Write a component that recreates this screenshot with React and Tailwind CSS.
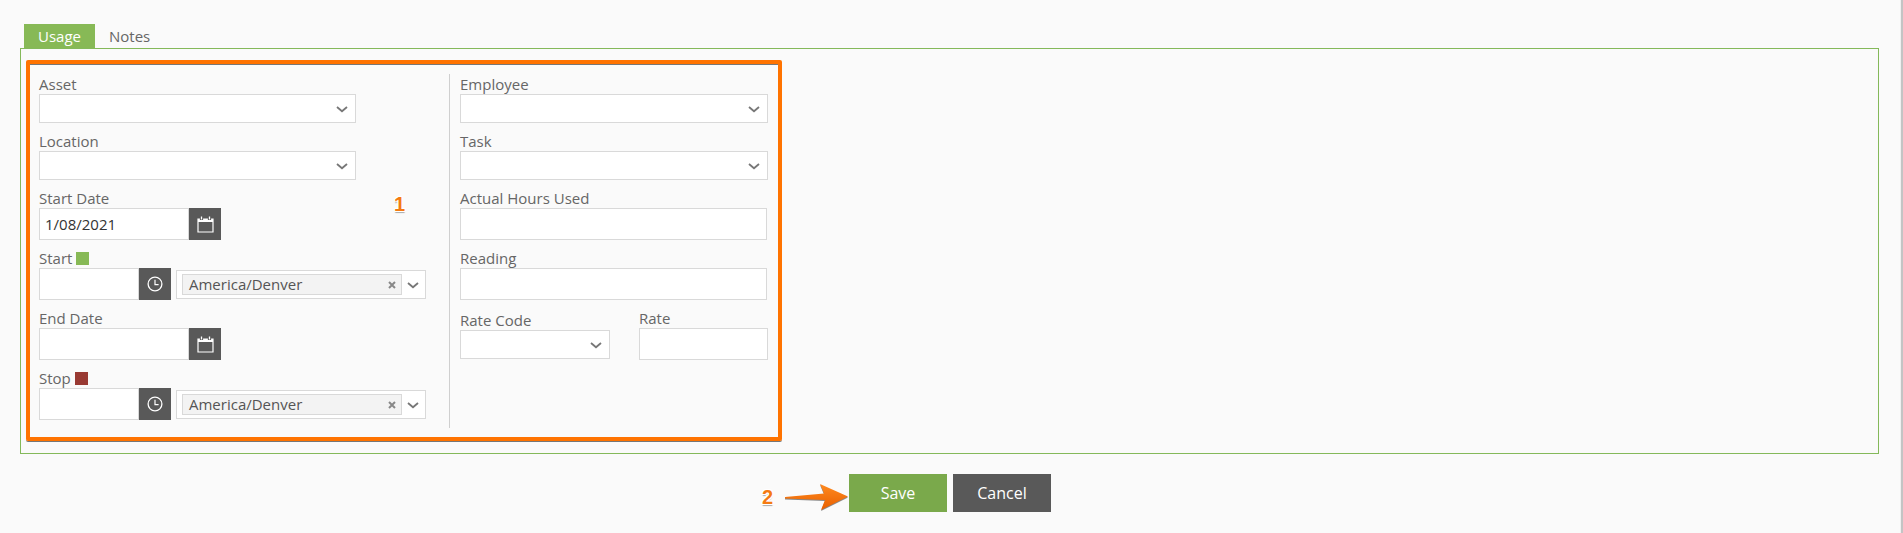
import React from 'react';

const Chevron = ({ className = '' }) => (
    <svg width="12" height="8" viewBox="0 0 12 8" className={className}>
        <path d="M1 2 L6 6.3 L11 2" fill="none" stroke="#777" strokeWidth="1.8" />
    </svg>
);

const CalendarIcon = () => (
    <svg width="17" height="17" viewBox="0 0 17 17">
        <path d="M1 3 H16 V16 H1 Z" fill="none" stroke="#fff" strokeWidth="1.2" />
        <path d="M1 3 H16 V6 H1 Z" fill="#fff" />
        <path d="M4.5 0.5 V4 M12.5 0.5 V4" stroke="#595959" strokeWidth="3.2" />
        <path d="M4.5 0.5 V3.5 M12.5 0.5 V3.5" stroke="#fff" strokeWidth="1.3" />
    </svg>
);

const ClockIcon = () => (
    <svg width="16" height="16" viewBox="0 0 16 16">
        <circle cx="8" cy="8" r="6.9" fill="none" stroke="#fff" strokeWidth="1.3" />
        <path d="M8 3.8 V8.6 H11.6" fill="none" stroke="#fff" strokeWidth="1.2" />
    </svg>
);

const Label = ({ children, className = '' }) => (
    <div className={`h-5 leading-[21px] text-[15px] text-[#666] ${className}`}>{children}</div>
);

const Combo = ({ className = 'w-full' }) => (
    <div className={`h-[29px] bg-white border border-[#d9d9d9] flex items-center justify-end pr-[7px] ${className}`}>
        <Chevron />
    </div>
);

const TextBox = ({ className = 'w-full', value = '' }) => (
    <input
        readOnly
        value={value}
        className={`h-[32px] bg-white border border-[#d9d9d9] pl-[5px] text-[15px] text-[#333] outline-none ${className}`}
    />
);

const IconInput = ({ width, icon, value }) => (
    <div className="flex">
        <TextBox className={width} value={value} />
        <div className="w-[32px] h-[32px] bg-[#595959] flex items-center justify-center">{icon}</div>
    </div>
);

const TimeZone = () => (
    <div className="ml-[5px] mt-[2px] w-[250px] h-[29px] bg-white border border-[#d9d9d9] flex items-center pl-[5px]">
        <div className="w-[220px] h-[21px] bg-[#f3f3f3] border border-[#d9d9d9] flex items-center justify-between pl-[6px] pr-[5px] text-[15px] text-[#555]">
            <span>America/Denver</span>
            <svg width="8" height="8" viewBox="0 0 8 8">
                <path d="M1 1 L7 7 M7 1 L1 7" stroke="#888" strokeWidth="2" />
            </svg>
        </div>
        <Chevron className="ml-[5px]" />
    </div>
);

const Field = ({ label, children }) => (
    <div className="mt-2 first:mt-0">
        {label}
        {children}
    </div>
);

export default function App() {
    return (
        <div className="relative flex w-[1903px] h-[533px] overflow-hidden bg-[#fafafa] font-['Open_Sans',sans-serif]">
            <div className="w-[1900px] pt-6">
                <div className="flex h-6 ml-6 text-[15px]">
                    <div className="w-[71px] bg-[#87b956] text-white flex items-center justify-center">Usage</div>
                    <div className="ml-[14px] text-[#666] flex items-center">Notes</div>
                </div>

                <div className="ml-5 mr-[21px] h-[406px] border border-[#84b95a] pt-[11px] pl-[5px]">
                    <div className="w-[756px] h-[381px] flex border-4 border-[#ff7300] rounded-[2px] pt-[10px] shadow-[0_1px_0_#777,inset_0_1px_0_#777]">
                        <div className="w-[420px] h-[354px] border-r border-[#cfcfcf] pl-[9px]">
                            <Field label={<Label>Asset</Label>}><Combo className="w-[317px]" /></Field>
                            <Field label={<Label>Location</Label>}><Combo className="w-[317px]" /></Field>
                            <Field label={<Label>Start Date</Label>}>
                                <IconInput width="w-[150px]" icon={<CalendarIcon />} value="1/08/2021" />
                            </Field>
                            <Field label={<Label className="flex items-center gap-[4px]">Start <span className="w-[13px] h-[13px] bg-[#87b956]" /></Label>}>
                                <div className="flex items-start">
                                    <IconInput width="w-[100px]" icon={<ClockIcon />} />
                                    <TimeZone />
                                </div>
                            </Field>
                            <Field label={<Label>End Date</Label>}>
                                <IconInput width="w-[150px]" icon={<CalendarIcon />} />
                            </Field>
                            <Field label={<Label className="flex items-center gap-[4px]">Stop <span className="w-[13px] h-[13px] bg-[#993a33]" /></Label>}>
                                <div className="flex items-start">
                                    <IconInput width="w-[100px]" icon={<ClockIcon />} />
                                    <TimeZone />
                                </div>
                            </Field>
                        </div>

                        <div className="w-[308px] ml-[10px]">
                            <Field label={<Label>Employee</Label>}><Combo /></Field>
                            <Field label={<Label>Task</Label>}><Combo /></Field>
                            <Field label={<Label>Actual Hours Used</Label>}><TextBox className="w-[307px]" /></Field>
                            <Field label={<Label>Reading</Label>}><TextBox className="w-[307px]" /></Field>
                            <div className="mt-2 flex justify-between">
                                <div className="mt-[2px]">
                                    <Label>Rate Code</Label>
                                    <Combo className="w-[150px]" />
                                </div>
                                <div>
                                    <Label>Rate</Label>
                                    <TextBox className="w-[129px]" />
                                </div>
                            </div>
                        </div>
                    </div>
                </div>

                <div className="mt-5 flex justify-center gap-[6px] text-[16px] text-white">
                    <button className="w-[98px] h-[38px] bg-[#7aa94b]">Save</button>
                    <button className="w-[98px] h-[38px] bg-[#595959]">Cancel</button>
                </div>
            </div>

            <div className="w-[3px] h-full border-l border-[#f0f0f0] bg-[#c4c4c4]" />

            {/* callouts drawn on top of the form */}
            <span className="absolute left-[394px] top-[192px] text-[20px] leading-[24px] font-bold text-[#f47a12] [font-family:'Liberation_Sans',sans-serif] [text-shadow:1px_1px_0_#fff,-1px_-1px_0_#fff,1px_-1px_0_#fff,-1px_1px_0_#fff,0_2px_1px_#aaa]">1</span>
            <span className="absolute left-[762px] top-[485px] text-[20px] leading-[24px] font-bold text-[#f47a12] [font-family:'Liberation_Sans',sans-serif] [text-shadow:1px_1px_0_#fff,-1px_-1px_0_#fff,1px_-1px_0_#fff,-1px_1px_0_#fff,0_2px_1px_#aaa]">2</span>
            <svg className="absolute left-[784px] top-[482px]" width="66" height="30" viewBox="0 0 66 30">
                <defs>
                    <linearGradient id="arrowFill" x1="0" y1="0" x2="0" y2="1">
                        <stop offset="0" stopColor="#ff8a1f" />
                        <stop offset="1" stopColor="#e85f00" />
                    </linearGradient>
                </defs>
                <path d="M1 15 L40 11.5 L36 2 L64 14.5 L37 28 L41 18 L1 16.5 Z" fill="#888" transform="translate(0 1)" />
                <path d="M1 15 L40 11.5 L36 2 L64 14.5 L37 28 L41 18 L1 16.5 Z" fill="url(#arrowFill)" />
            </svg>
        </div>
    );
}
